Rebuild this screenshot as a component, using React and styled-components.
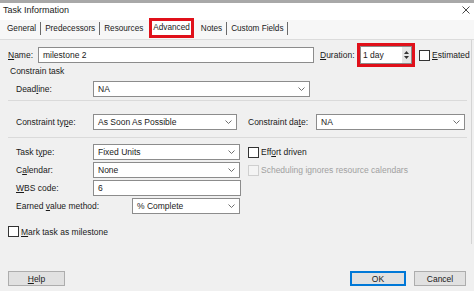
import styled, { createGlobalStyle } from 'styled-components'

const GlobalStyle = createGlobalStyle`
  html, body {
    margin: 0;
    padding: 0;
    background: #f0f0f0;
  }
  body {
    font-family: "Liberation Sans", Arial, sans-serif;
    color: #1a1a1a;
  }
`

const Window = styled.div`
  width: 474px;
  height: 291px;
  display: flex;
  flex-direction: column;
  background: #f0f0f0;
  overflow: hidden;
`
const TopEdge = styled.div`
  height: 3px;
  background: #a8a8a8;
`
const TitleBar = styled.div`
  height: 14px;
  display: flex;
  align-items: center;
  justify-content: space-between;
  padding: 0 4px 0 3px;
  background: #ffffff;
  font-size: 9px;
`
const TabStrip = styled.div`
  height: 22px;
  display: flex;
  align-items: center;
  padding-left: 3px;
  background: linear-gradient(#ffffff 0 3px, #f7f7f7 3px);
  border-bottom: 1px solid #dcdcdc;
  font-size: 8.2px;
`
const Tab = styled.div`
  height: 13px;
  line-height: 13px;
  padding: 0 4px;
  border-right: ${p => (p.$sep ? '1px solid #6a6a6a' : '1px solid transparent')};
`
const ActiveTab = styled.div`
  height: 14px;
  line-height: 14px;
  padding: 0 1px;
  margin: 0 3px 0 1px;
  border: 3px solid #e0101a;
  background: #ffffff;
`
const Page = styled.div`
  width: 463px;
  height: 204px;
  padding-left: 8px;
  border-right: 1px solid #d4d4d4;
  display: flex;
  flex-direction: column;
  font-size: 8.5px;
`
const Row = styled.div`
  display: flex;
  align-items: center;
  height: ${p => p.$h || 16}px;
  margin-top: ${p => p.$mt || 0}px;
  padding-left: ${p => p.$indent || 0}px;
`
const Label = styled.div`
  width: ${p => p.$w}px;
  margin-left: ${p => p.$ml || 0}px;
  white-space: nowrap;
  flex-shrink: 0;
  color: ${p => (p.$disabled ? '#a0a0a0' : '#1a1a1a')};
`
const Field = styled.div`
  width: ${p => p.$w}px;
  height: 16px;
  box-sizing: border-box;
  border: 1px solid #8c8c8c;
  background: #ffffff;
  display: flex;
  align-items: center;
  justify-content: space-between;
  padding: 0 4px 0 4px;
  flex-shrink: 0;
`
const SectionTitle = styled.div`
  height: 8px;
  line-height: 8px;
  padding-left: 2px;
`
const Separator = styled.div`
  height: 1px;
  margin-top: ${p => p.$mt}px;
  margin-right: 4px;
  background: #dadada;
`
const RedBox = styled.div`
  width: 58px;
  height: 24px;
  box-sizing: border-box;
  border: 3px solid #e0101a;
  display: flex;
  flex-shrink: 0;
`
const SpinInput = styled.div`
  flex: 1;
  background: #ffffff;
  border: 1px solid #8c8c8c;
  display: flex;
  align-items: center;
  justify-content: space-between;
  padding-left: 2px;
`
const Spinner = styled.div`
  width: 9px;
  height: 100%;
  background: #e6e6e6;
  display: flex;
  flex-direction: column;
  align-items: center;
  justify-content: center;
  gap: 2px;
`
const Box = styled.div`
  width: 11px;
  height: 11px;
  box-sizing: border-box;
  border: 1px solid ${p => (p.$disabled ? '#cfcfcf' : '#333333')};
  background: ${p => (p.$disabled ? '#f4f4f4' : '#ffffff')};
  margin-left: ${p => p.$ml || 0}px;
  margin-right: 2px;
  flex-shrink: 0;
`
const Footer = styled.div`
  display: flex;
  align-items: center;
  padding: 27px 8px 0 8px;
  font-size: 8.5px;
`
const Button = styled.div`
  width: ${p => p.$w}px;
  height: 15px;
  box-sizing: border-box;
  display: flex;
  align-items: center;
  justify-content: center;
  background: #e1e1e1;
  border: ${p => (p.$primary ? '2px solid #0078d7' : '1px solid #adadad')};
  margin-left: ${p => p.$ml || 0}px;
`
const Spacer = styled.div`
  flex: 1;
`

const Chevron = () => (
  <svg width="7" height="4" viewBox="0 0 7 4">
    <polyline points="0.5,0.5 3.5,3.5 6.5,0.5" fill="none" stroke="#606060" strokeWidth="0.9" />
  </svg>
)

const Close = () => (
  <svg width="8" height="8" viewBox="0 0 8 8">
    <path d="M0.5 0.5 L7.5 7.5 M7.5 0.5 L0.5 7.5" stroke="#333" strokeWidth="0.9" />
  </svg>
)

const Select = ({ w, value }) => (
  <Field $w={w}>
    <span>{value}</span>
    <Chevron />
  </Field>
)

const App = () => {
  return (
    <>
      <GlobalStyle />
      <Window>
        <TopEdge />
        <TitleBar>
          <span>Task Information</span>
          <Close />
        </TitleBar>
        <TabStrip>
          <Tab $sep>General</Tab>
          <Tab $sep>Predecessors</Tab>
          <Tab>Resources</Tab>
          <ActiveTab>Advanced</ActiveTab>
          <Tab $sep>Notes</Tab>
          <Tab $sep>Custom Fields</Tab>
        </TabStrip>
        <Page>
          <Row $h={24} $mt={3}>
            <Label $w={30}><u>N</u>ame:</Label>
            <Field $w={276}>milestone 2</Field>
            <Label $w={37} $ml={6}><u>D</u>uration:</Label>
            <RedBox>
              <SpinInput>
                <span>1 day</span>
                <Spinner>
                  <svg width="5" height="3" viewBox="0 0 5 3"><polygon points="0,3 2.5,0 5,3" fill="#333" /></svg>
                  <svg width="5" height="3" viewBox="0 0 5 3"><polygon points="0,0 2.5,3 5,0" fill="#333" /></svg>
                </Spinner>
              </SpinInput>
            </RedBox>
            <Box $ml={4} />
            <Label $w={40}><u>E</u>stimated</Label>
          </Row>
          <SectionTitle>Constrain task</SectionTitle>
          <Row $mt={6} $indent={8}>
            <Label $w={77}>Dead<u>l</u>ine:</Label>
            <Select w={217} value="NA" />
          </Row>
          <Separator $mt={3} />
          <Row $mt={13} $indent={8}>
            <Label $w={77}>Constraint ty<u>p</u>e:</Label>
            <Select w={144} value="As Soon As Possible" />
            <Label $w={68} $ml={11}>Constraint da<u>t</u>e:</Label>
            <Select w={149} value="NA" />
          </Row>
          <Separator $mt={7} />
          <Row $mt={6} $indent={8}>
            <Label $w={77}>Task t<u>y</u>pe:</Label>
            <Select w={147} value="Fixed Units" />
            <Box $ml={8} />
            <Label $w={60}>Eff<u>o</u>rt driven</Label>
          </Row>
          <Row $mt={2} $indent={8}>
            <Label $w={77}>C<u>a</u>lendar:</Label>
            <Select w={147} value="None" />
            <Box $ml={8} $disabled />
            <Label $w={150} $disabled>Scheduling ignores resource calendars</Label>
          </Row>
          <Row $mt={2} $indent={8}>
            <Label $w={77}><u>W</u>BS code:</Label>
            <Field $w={148}>6</Field>
          </Row>
          <Row $mt={2} $indent={8}>
            <Label $w={116}>Earned <u>v</u>alue method:</Label>
            <Select w={108} value="% Complete" />
          </Row>
          <Row $h={11} $mt={12}>
            <Box />
            <Label $w={100}><u>M</u>ark task as milestone</Label>
          </Row>
        </Page>
        <Footer>
          <Button $w={57}><u>H</u>elp</Button>
          <Spacer />
          <Button $w={56} $primary>OK</Button>
          <Button $w={52} $ml={8}>Cancel</Button>
        </Footer>
      </Window>
    </>
  )
}

export default App
